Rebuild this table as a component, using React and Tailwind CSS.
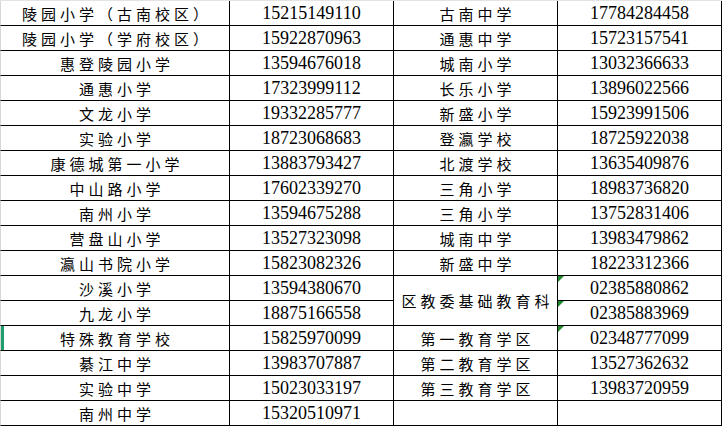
const rows = [
  ["陵园小学（古南校区）", "15215149110", "古南中学", "17784284458"],
  ["陵园小学（学府校区）", "15922870963", "通惠中学", "15723157541"],
  ["惠登陵园小学", "13594676018", "城南小学", "13032366633"],
  ["通惠小学", "17323999112", "长乐小学", "13896022566"],
  ["文龙小学", "19332285777", "新盛小学", "15923991506"],
  ["实验小学", "18723068683", "登瀛学校", "18725922038"],
  ["康德城第一小学", "13883793427", "北渡学校", "13635409876"],
  ["中山路小学", "17602339270", "三角小学", "18983736820"],
  ["南州小学", "13594675288", "三角小学", "13752831406"],
  ["营盘山小学", "13527323098", "城南中学", "13983479862"],
  ["瀛山书院小学", "15823082326", "新盛中学", "18223312366"],
  ["沙溪小学", "13594380670", "区教委基础教育科", "02385880862"],
  ["九龙小学", "18875166558", null, "02385883969"],
  ["特殊教育学校", "15825970099", "第一教育学区", "02348777099"],
  ["綦江中学", "13983707887", "第二教育学区", "13527362632"],
  ["实验中学", "15023033197", "第三教育学区", "13983720959"],
  ["南州中学", "15320510971", "", ""],
];

const cn = "font-['Noto_Sans_CJK_SC',sans-serif] text-[15px] tracking-[4px] pl-[4px] text-black";
const num = "font-['Liberation_Serif',serif] text-[18px] text-black";
const cell = "relative flex h-[25px] items-center justify-center border-b border-r border-black leading-none";

function Flag() {
  return (
    <svg className="absolute left-0 top-0" width="6" height="6" viewBox="0 0 6 6">
      <polygon points="0,0 6,0 0,6" fill="#1f8a2a" />
    </svg>
  );
}

export default function App() {
  return (
    <div className="h-[428px] w-[722px] overflow-hidden bg-white">
      <div className="h-[1px] bg-[#e3e3e3]" />
      <div className="grid grid-cols-[230px_164px_164px_164px]">
        {rows.map((r, i) => (
          <div key={i} className="contents">
            <div className={`${cell} border-l border-l-[#d6d6d6] ${cn}`}>
              {i === 13 ? <div className="absolute left-0 top-0 h-full w-[3px] bg-[#1f9d6b]" /> : null}
              {r[0]}
            </div>
            <div className={`${cell} ${num}`}>{r[1]}</div>
            {r[2] === null ? null : (
              <div className={`${cell} ${cn} ${i === 11 ? "row-span-2 h-[50px]" : ""}`}>
                {r[2]}
              </div>
            )}
            <div className={`${cell} ${num}`}>
              {i >= 11 && i <= 13 ? <Flag /> : null}
              {r[3]}
            </div>
          </div>
        ))}
      </div>
    </div>
  );
}
